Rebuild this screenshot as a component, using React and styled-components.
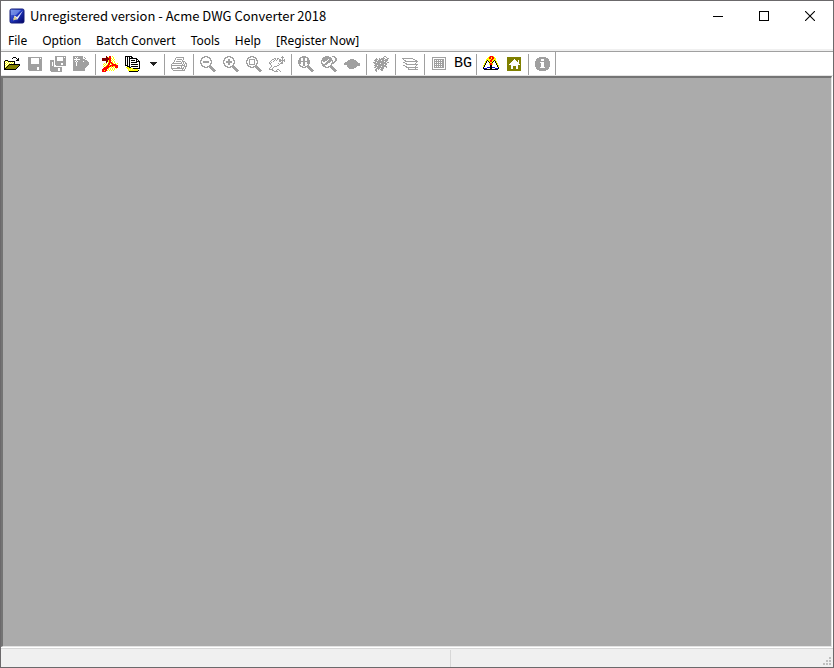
import React from "react";
import styled, { createGlobalStyle } from "styled-components";

const GlobalStyle = createGlobalStyle`
  * {
    box-sizing: border-box;
  }
  body {
    margin: 0;
    font-family: "Noto Sans CJK SC", "Noto Sans", sans-serif;
    font-size: 13px;
    color: #000;
  }
  button {
    font: inherit;
    color: inherit;
    margin: 0;
    padding: 0;
    border: none;
    background: none;
  }
`;

const palette = {
  k: "#000000",
  g: "#a0a0a0",
  w: "#ffffff",
  y: "#ffff00",
  l: "#ffff80",
  o: "#808000",
  r: "#ff0000",
  m: "#800000",
  b: "#0000c0",
};

const lens = [
  "....gggg",
  "..ggg..ggg",
  ".gg......gg",
  ".g........g",
  "gg........gg",
  "g..........g",
  "g..........g",
  "gg........gg",
  ".g........g",
  ".gg......gg",
  "..ggg..ggggg",
  "....gggg.gggg",
  "..........gggg",
  "...........gggg",
  "............gggg",
  ".............gg",
];

const icons = {
  open: [[
    "",
    ".........kkk",
    "........k...k.k",
    ".............kk",
    ".kkk........kkk",
    "kywykkkkkkk",
    "kwywywywywk",
    "kywywywywyk",
    "kwywykkkkkkkkkkk",
    "kywykooooooooook",
    "kwykooooooooook",
    "kykooooooooook",
    "kkooooooooook",
    "kkkkkkkkkkkk",
  ]],
  save: [[
    "",
    ".gggggggggggggg",
    ".ggg........g.g",
    ".ggg........ggg",
    ".ggg........ggg",
    ".ggg........ggg",
    ".ggg........ggg",
    ".ggg........ggg",
    ".gggggggggggggg",
    ".gggggggggggggg",
    ".gggggggggggggg",
    ".ggggggggg..ggg",
    ".ggggggggg..ggg",
    ".ggggggggg..ggg",
    "..ggggggggggggg",
  ]],
  saveAll: [[
    ".....ggggggggggg",
    ".....gg......g.g",
    ".....gg......ggg",
    ".....gg......ggg",
    "gggg.gg......ggg",
    "gggg.ggggggggggg",
    "gg.g.ggggggggggg",
    "gg.g.gggggg..ggg",
    "gg.g.gggggg..ggg",
    "gg.g..gggggggggg",
    "gggg",
    "gggggggggggg",
    "gggggggg..gg",
    "gggggggg..gg",
    "gggggggg..gg",
    ".ggggggggggg",
  ]],
  exportFile: [[
    "gggggggggg",
    "gg.g.ggggg.g",
    "ggg.gggggg..g",
    "g......ggggg",
    "ggg.gggggggggg",
    "gg.g.ggggg.gggg",
    "ggg.gggggggggggg",
    "ggg.gggggggggggg",
    "ggg.gggggggggggg",
    "ggg.ggggggggggg",
    "gggggggggggggg",
    "ggggggggggggg",
    "gggggggggggg",
    "gggggggggggg",
    "gggggggggggg",
  ]],
  acrobat: [[
    "....m..rr.y",
    "....mmyrr..y",
    "mmmmmmmrry.y",
    "mmmmmmmrr.y.y",
    "mmmmmmyrry.y",
    "....mmyrr.y.y",
    "....m.yrrry.y",
    "..y.y.rryrry.y.y",
    ".y.y.yrr.yrrrry",
    "..y.yrryrrrrrrrr",
    ".y.yrrrrryryyrrr",
    "..rrrrry.y.y.rrr",
    ".rrrrry.y.y.y.y",
    "rrrrr.y.y.y.y",
    "rryrry.y.y.y",
    "rrrr",
  ]],
  batch: [[
    "kkkkkkk",
    "k.k.k.kk",
    "k.k.kkkkkkkk",
    "k.k.k......kk",
    "k.k.k.kkkk.k.k",
    "k.k.k......kkkk",
    "k.k.k.kkkkkk..k",
    "k.k.k.........k",
    "k.k.k.kkkkkkk.k",
    "kkk.k.........k",
    "..kkk.kkkkkkk.k",
    ".yyykk........k",
    "..yyyyyykkkkkkk",
    "...ylylylyyyy",
    "...yyyyyyyyyyk",
    "....kkkkkkkkk",
  ]],
  print: [[
    "",
    ".....gggggggg",
    "....g.......g",
    "....g.ggggg.g",
    "...g.......g",
    "...g.ggggg.ggg",
    "..g.......g.g.g",
    ".gggggggggg.g.gg",
    "g..........g.g.g",
    "gggggggggggggg.g",
    "g.........g..ggg",
    "g.....ggg.g.g.g",
    "ggggggggggggg.g",
    ".g.........g.g",
    "..gggggggggggg",
  ]],
  zoomOut: [lens, ["", "", "", "", "", "...gggggg", "...gggggg"]],
  zoomIn: [lens, ["", "", "", ".....gg", ".....gg", "...gggggg", "...gggggg", ".....gg", ".....gg"]],
  zoomWindow: [lens, ["", "", "", "...gggggg", "...g....g", "...g....g", "...g....g", "...g....g", "...gggggg"]],
  pan: [[
    ".............g",
    "............ggg",
    ".....gg.gg...g",
    "...gg.g.g.gg.g.g",
    "..g..g.g..gggggg",
    ".g..g.....gg.g.g",
    "g.g.........gg",
    "gg.......g.ggg",
    ".g........g",
    "..g.....gg",
    "..g..ggg",
    ".g..g",
    "g..g",
    "gggg....gg",
    "...gg..g..g",
    ".....gggg..g",
  ]],
  zoomExtents: [lens, [
    "",
    ".....gg",
    ".....gg",
    "..g..gg..g",
    ".gg..gg..gg",
    ".gggggggggg",
    ".gg..gg..gg",
    "..g..gg..g",
    ".....gg",
    ".....gg",
  ]],
  zoomPrevious: [lens, [
    "...........ggg",
    "....ggg......gg",
    "...ggggggg....gg",
    "..ggggg.gg....gg",
    "..gggg.ggg....gg",
    "..gg..gggg...gg",
    ".....gggg...gg",
    "....ggg....gg",
    "..gggg",
    "..gg",
  ]],
  turtle: [[
    "",
    "",
    "",
    "......gggg",
    "....gggggggg",
    "...gggggggggg",
    ".ggggggggggggg",
    "gggggggggggggggg",
    "gggggggggggggggg",
    "...ggggggggggggg",
    "...gggggggggg",
    "....gggggggg",
    ".....ggggg",
  ]],
  bug: [[
    "...........gg",
    "..........g..g",
    "...g..g.gggg..gg",
    "..ggg.ggggg.ggg",
    ".ggg.ggg.gggggg",
    "..ggggggggg.gg",
    "ggg.ggggggggg.gg",
    ".gggggg.gggggg",
    "..ggggggggg.gg",
    ".ggg.gggggggg",
    "..gggggg.ggggg",
    ".gg.ggggggg..g",
    "...gggg.ggg",
    "..gg.g.ggg",
    "..gg....gg",
    "...g",
  ]],
  layers: [[
    "",
    "",
    "ggggggggggg",
    ".g.........gg",
    "..gg.........gg",
    "...ggggggggggggg",
    ".gg...........g",
    "...gg........g",
    "....gggggggggggg",
    ".gg...........g",
    "...gg........g",
    "....gggggggggggg",
    "......g......g",
    "......gggggggggg",
  ]],
  grid: [[
    "",
    ".gggggggggggggg",
    ".g............g",
    ".g.gggggggggg.g",
    ".g.g.g.g.g.gg.g",
    ".g.gggggggggg.g",
    ".g.g.g.g.g.gg.g",
    ".g.gggggggggg.g",
    ".g.g.g.g.g.gg.g",
    ".g.gggggggggg.g",
    ".g.g.g.g.g.gg.g",
    ".g.gggggggggg.g",
    ".g............g",
    ".gggggggggggggg",
  ]],
  help: [[
    "......yrrry",
    ".....yrryrry",
    "....yyrryrryy",
    "...yyyyyrryyy",
    "...ykyyrryyky",
    "..ykwkyrrykwky",
    "..ykwwkyykwwky",
    ".ykwwwyrrywwwky",
    ".ykwwwyrrywwwky",
    "ykwwwwwkkwwwwwky",
    "ykwwwwwkkwwwwwky",
    "kwwwbbbkkbbbwwwk",
    "kbbbwwwkkwwwbbbk",
    ".kkkkkkkkkkkkkk",
  ]],
  home: [[
    "",
    ".oooooooooooooo",
    ".oooooooooooooo",
    ".ooooooowoooooo",
    ".oooooowwwoowoo",
    ".ooooowwwwwowoo",
    ".oooowwwwwwwwoo",
    ".ooowwwwwwwwwoo",
    ".oowwwwwwwwwwwo",
    ".oooowwwwwwwooo",
    ".oooowwooowwooo",
    ".oooowwooowwooo",
    ".oooowwooowwooo",
    ".oooooooooooooo",
    ".oooooooooooooo",
  ]],
  info: [[
    "",
    "....ggggggg",
    "..ggggggggggg",
    ".ggggg...ggggg",
    ".ggggg...ggggg",
    "ggggggggggggggg",
    "ggggg....gggggg",
    "gggggg...gggggg",
    "gggggg...gggggg",
    "gggggg...gggggg",
    "gggggg...gggggg",
    ".gggg.....gggg",
    ".ggggggggggggg",
    "..ggggggggggg",
    "....ggggggg",
  ]],
};

// turns every run of equal letters into one rect
const PixelIcon = ({ name }) => {
  const rects = [];
  icons[name].forEach((rows, layer) => {
    rows.forEach((row, y) => {
      let x = 0;
      while (x < row.length) {
        let end = x + 1;
        while (row[end] === row[x]) end++;
        if (row[x] !== ".") {
          rects.push(
            <rect key={`${layer}-${y}-${x}`} x={x} y={y} width={end - x} height="1" fill={palette[row[x]]} />
          );
        }
        x = end;
      }
    });
  });
  return (
    <svg width="16" height="16" viewBox="0 0 16 16" shapeRendering="crispEdges" aria-hidden="true">
      {rects}
    </svg>
  );
};

const toolGroups = [
  [
    { icon: "open", label: "Open" },
    { icon: "save", label: "Save", disabled: true },
    { icon: "saveAll", label: "Save as", disabled: true },
    { icon: "exportFile", label: "Export", disabled: true },
  ],
  [
    { icon: "acrobat", label: "Convert to PDF" },
    { icon: "batch", label: "Batch convert" },
    { icon: "arrow", label: "More batch options" },
  ],
  [{ icon: "print", label: "Print", disabled: true }],
  [
    { icon: "zoomOut", label: "Zoom out", disabled: true },
    { icon: "zoomIn", label: "Zoom in", disabled: true },
    { icon: "zoomWindow", label: "Zoom window", disabled: true },
    { icon: "pan", label: "Pan", disabled: true },
  ],
  [
    { icon: "zoomExtents", label: "Zoom extents", disabled: true },
    { icon: "zoomPrevious", label: "Zoom previous", disabled: true },
    { icon: "turtle", label: "View", disabled: true },
  ],
  [{ icon: "bug", label: "Regenerate", disabled: true }],
  [{ icon: "layers", label: "Layers", disabled: true }],
  [
    { icon: "grid", label: "Layout", disabled: true },
    { text: "BG", label: "BG" },
  ],
  [
    { icon: "help", label: "Help" },
    { icon: "home", label: "Home page" },
  ],
  [{ icon: "info", label: "About", disabled: true }],
];

const menus = ["File", "Option", "Batch Convert", "Tools", "Help", "[Register Now]"];

const Tool = ({ tool }) => {
  if (tool.icon === "arrow") {
    return (
      <ToolButton type="button" aria-label={tool.label} $narrow>
        <svg width="7" height="4" viewBox="0 0 7 4" shapeRendering="crispEdges" aria-hidden="true">
          <path d="M0 0h7v1h-1v1h-1v1h-1v1h-1v-1h-1v-1h-1v-1h-1z" fill="#222" />
        </svg>
      </ToolButton>
    );
  }
  return (
    <ToolButton type="button" aria-label={tool.label} disabled={tool.disabled}>
      {tool.text ? <ToolText>{tool.text}</ToolText> : <PixelIcon name={tool.icon} />}
    </ToolButton>
  );
};

const App = () => {
  return (
    <>
      <GlobalStyle />
      <Window>
        <TitleBar>
          <svg width="16" height="16" viewBox="0 0 16 16" aria-hidden="true">
            <defs>
              <linearGradient id="logoFill" x1="0" y1="0" x2="1" y2="1">
                <stop offset="0" stopColor="#6f8ce8" />
                <stop offset="0.45" stopColor="#2038c0" />
                <stop offset="1" stopColor="#000060" />
              </linearGradient>
            </defs>
            <rect x="1" y="1" width="14" height="14" rx="1.5" fill="url(#logoFill)" stroke="#141c78" strokeWidth="1" />
            <path d="M2 2h10L7 7H2z" fill="#8ca6f0" opacity="0.6" />
            <path d="M14 2.5L8.5 11.5 4.5 11 5.5 7.5 8 9z" fill="#e8ecff" />
            <path d="M5.5 8l3 3-4.5 1.5z" fill="#d8cc90" />
          </svg>
          <Title>Unregistered version - Acme DWG Converter 2018</Title>
          <CaptionButton type="button" aria-label="Minimize">
            <svg width="10" height="10" shapeRendering="crispEdges"><path d="M0 5.5h10" stroke="#000" /></svg>
          </CaptionButton>
          <CaptionButton type="button" aria-label="Maximize">
            <svg width="10" height="10" shapeRendering="crispEdges">
              <rect x="0.5" y="0.5" width="9" height="9" fill="none" stroke="#000" />
            </svg>
          </CaptionButton>
          <CaptionButton type="button" aria-label="Close">
            <svg width="10" height="10"><path d="M0 0l10 10M10 0L0 10" stroke="#000" strokeWidth="1.1" /></svg>
          </CaptionButton>
        </TitleBar>
        <MenuBar>
          {menus.map((menu) => (
            <MenuItem type="button" key={menu}>{menu}</MenuItem>
          ))}
        </MenuBar>
        <Toolbar role="toolbar" aria-label="Main">
          {toolGroups.map((group, i) => (
            <React.Fragment key={i}>
              {i > 0 && <Separator />}
              {group.map((tool) => (
                <Tool key={tool.label} tool={tool} />
              ))}
            </React.Fragment>
          ))}
          <ToolbarEnd />
        </Toolbar>
        <Workspace />
        <StatusBar>
          <StatusPane />
          <StatusPane $last>
            <svg width="8" height="8" shapeRendering="crispEdges" fill="#bfbfbf" aria-hidden="true">
              <path d="M6 0h2v2h-2zM3 3h2v2h-2zM6 3h2v2h-2zM0 6h2v2h-2zM3 6h2v2h-2zM6 6h2v2h-2z" />
            </svg>
          </StatusPane>
        </StatusBar>
      </Window>
    </>
  );
};

const Window = styled.div`
  display: flex;
  flex-direction: column;
  height: 100vh;
  border: 1px solid #6b696b;
  background: #fff;
`;

const TitleBar = styled.header`
  display: flex;
  align-items: center;
  height: 29px;
  padding-left: 8px;
`;

const Title = styled.h1`
  flex: 1;
  margin: 0 0 0 5px;
  font-size: 13px;
  font-weight: 400;
  line-height: 20px;
  white-space: nowrap;
`;

const CaptionButton = styled.button`
  display: flex;
  align-items: center;
  justify-content: center;
  width: 46px;
  height: 100%;
`;

const MenuBar = styled.nav`
  display: flex;
  gap: 1px;
  height: 21px;
  border-bottom: 2px solid #f0f0f0;
`;

const MenuItem = styled.button`
  padding: 0 7px;
  font-family: "Noto Sans", "Open Sans", sans-serif;
  font-size: 12px;
  line-height: 22px;
  white-space: nowrap;
`;

const Toolbar = styled.div`
  display: flex;
  height: 25px;
  border-top: 1px solid #a0a0a0;
  border-bottom: 1px solid #e3e3e3;
`;

const ToolButton = styled.button`
  display: flex;
  align-items: center;
  justify-content: ${(props) => (props.$narrow ? "center" : "flex-start")};
  width: ${(props) => (props.$narrow ? "17px" : "23px")};
  padding-left: ${(props) => (props.$narrow ? "0" : "3px")};
  height: 24px;
`;

const ToolText = styled.span`
  font-family: "Liberation Sans Narrow", "Liberation Mono", monospace;
  font-size: 15px;
  line-height: 16px;
`;

const Separator = styled.div`
  width: 1px;
  height: 21px;
  margin: 2px 3px 0 2px;
  background: #a0a0a0;
`;

const ToolbarEnd = styled.div`
  width: 1px;
  background: #a0a0a0;
`;

const Workspace = styled.main`
  flex: 1;
  border-style: solid;
  border-width: 2px 1px 1px 2px;
  border-color: #747474 #e3e3e3 #e3e3e3 #747474;
  margin-right: 1px;
  background: #ababab;
`;

const StatusBar = styled.footer`
  display: flex;
  height: 19px;
  margin-top: 1px;
  padding-top: 1px;
  border-top: 1px solid #d7d7d7;
  background: #f0f0f0;
`;

const StatusPane = styled.div`
  display: flex;
  align-items: flex-end;
  justify-content: flex-end;
  flex: ${(props) => (props.$last ? "0 0 382px" : "1")};
  border-right: ${(props) => (props.$last ? "none" : "1px solid #d7d7d7")};
  padding: 0 2px 2px 0;
`;

export default App;
